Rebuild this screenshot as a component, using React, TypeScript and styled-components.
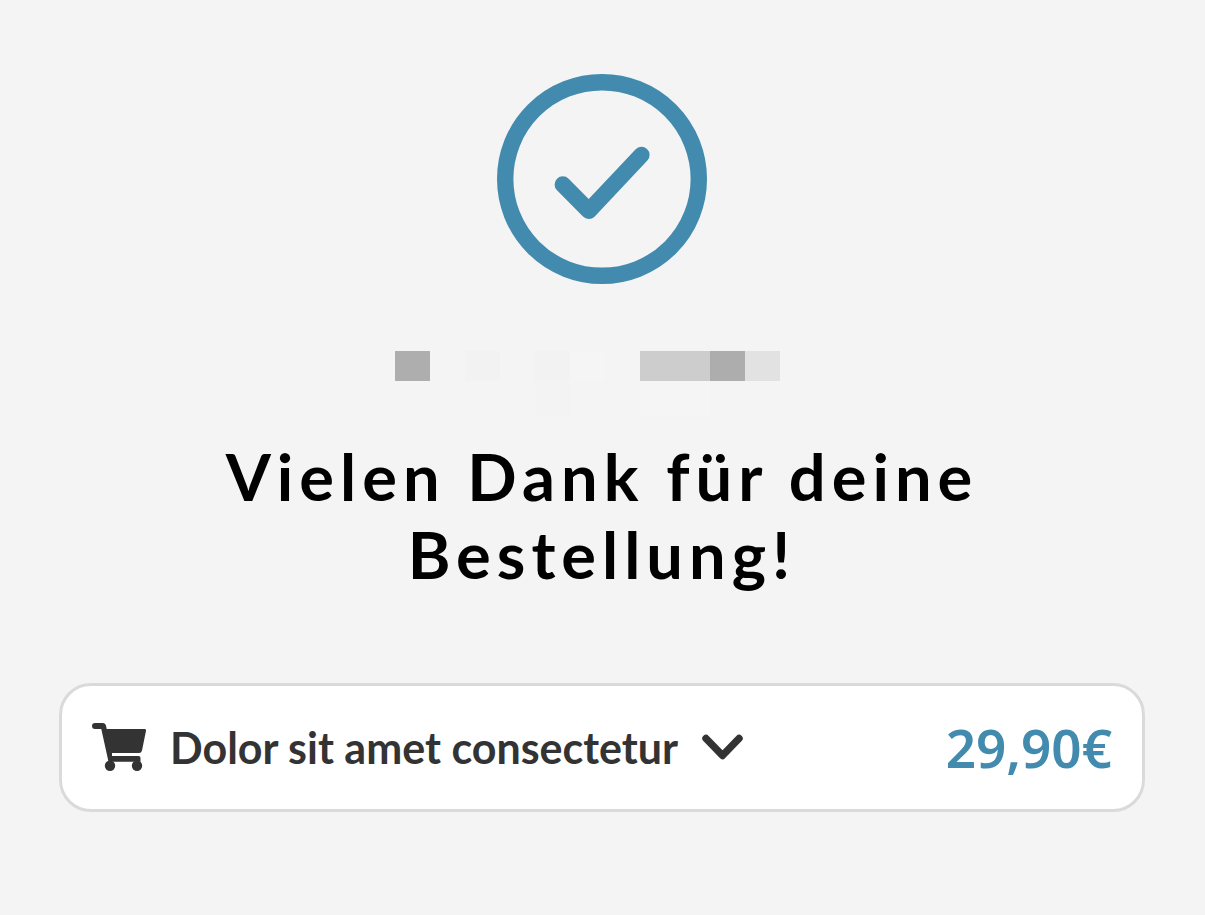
import React, { useState } from "react";
import styled, { createGlobalStyle } from "styled-components";

const GlobalStyle = createGlobalStyle`
  *, *::before, *::after { box-sizing: border-box; }
  body {
    margin: 0;
    background: #f4f4f4;
    color: #000;
    font-family: "Noto Sans", "Open Sans", sans-serif;
  }
`;

const Page = styled.main`
  display: flex;
  flex-direction: column;
  align-items: center;
  padding: 74px 60px 100px 59px;
`;

const SuccessIcon = styled.svg`
  display: block;
  width: 210px;
  height: 210px;
`;

const Redacted = styled.div`
  display: grid;
  grid-template-columns: repeat(11, 35px) 30px;
  grid-template-rows: 30px 35px;
  margin-top: 67px;
`;

const Block = styled.span<{ $column: number; $row: number; $tone: string }>`
  grid-column: ${(p) => p.$column};
  grid-row: ${(p) => p.$row};
  background: ${(p) => p.$tone};
`;

const Title = styled.h1`
  margin: 21px 0 0;
  font-family: Lato, sans-serif;
  font-size: 65px;
  font-weight: 700;
  line-height: 78px;
  letter-spacing: 6px;
  text-align: center;
`;

const Summary = styled.section`
  display: flex;
  align-items: center;
  justify-content: space-between;
  width: 100%;
  min-height: 129px;
  margin-top: 90px;
  padding: 0 30px;
  background: #fff;
  border: 3px solid #dadada;
  border-radius: 32px;
`;

const Toggle = styled.button`
  display: flex;
  align-items: center;
  gap: 24px;
  padding: 0;
  border: 0;
  background: none;
  color: #333;
  font-family: Lato, sans-serif;
  font-size: 43px;
  font-weight: 700;
  line-height: 56px;
  cursor: pointer;
`;

const Icon = styled.svg`
  display: block;
  flex: none;
`;

const Price = styled.strong`
  color: #428bae;
  font-size: 53px;
  font-weight: 600;
  line-height: 64px;
`;

const blocks = [
  { column: 1, row: 1, tone: "#aeaeae" },
  { column: 3, row: 1, tone: "#f2f2f2" },
  { column: 5, row: 1, tone: "#f2f2f2" },
  { column: 6, row: 1, tone: "#f5f5f5" },
  { column: 8, row: 1, tone: "#cdcdcd" },
  { column: 9, row: 1, tone: "#cdcdcd" },
  { column: 10, row: 1, tone: "#adadad" },
  { column: 11, row: 1, tone: "#e2e2e2" },
  { column: 5, row: 2, tone: "#f3f3f3" },
  { column: 8, row: 2, tone: "#f5f5f5" },
  { column: 9, row: 2, tone: "#f5f5f5" },
];

export default function App() {
  const [open, setOpen] = useState(false);
  return (
    <>
      <GlobalStyle />
      <Page>
        <SuccessIcon viewBox="0 0 210 210" fill="none" stroke="#428bae" strokeWidth="16.4" aria-hidden="true">
          <circle cx="105" cy="105" r="96.8" />
          <path d="M65.8 110.5 91.8 136.8 144.4 81" strokeLinecap="round" strokeLinejoin="round" />
        </SuccessIcon>
        <Redacted aria-hidden="true">
          {blocks.map((b) => (
            <Block key={`${b.column}-${b.row}`} $column={b.column} $row={b.row} $tone={b.tone} />
          ))}
        </Redacted>
        <Title>Vielen Dank für deine Bestellung!</Title>
        <Summary>
          <Toggle type="button" aria-expanded={open} onClick={() => setOpen(!open)}>
            <Icon width="54" height="52" viewBox="0 0 54 52" fill="#333" aria-hidden="true">
              <path d="M3 1H11Q13.500 1 14 3.500L14.700 7H52.500Q54.300 7 54 8.800L50 28.500Q49.400 31 47 31H20V34H46.500Q48.500 34 48.500 36V39.700H16.500L9.300 7H3A3 3 0 0 1 3 1Z" />
              <circle cx="18" cy="43.800" r="5.200" />
              <circle cx="45" cy="43.800" r="5.200" />
            </Icon>
            Dolor sit amet consectetur
            <Icon width="41" height="28" viewBox="0 0 41 28" fill="none" stroke="#333" strokeWidth="7.4" strokeLinecap="round" strokeLinejoin="round" aria-hidden="true">
              <path d="M4 4.500 20.500 21.500 37 4.500" />
            </Icon>
          </Toggle>
          <Price>29,90€</Price>
        </Summary>
      </Page>
    </>
  );
}
